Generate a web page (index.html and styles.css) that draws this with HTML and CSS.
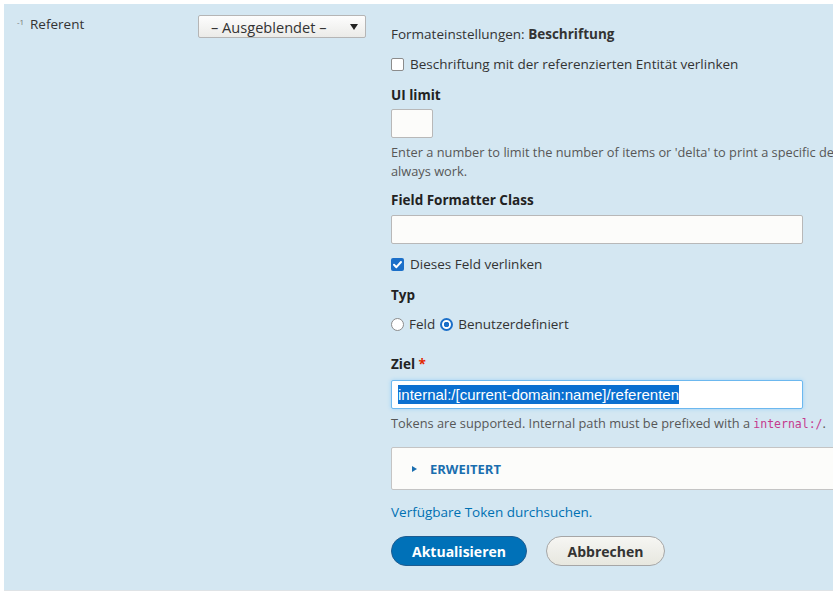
FILE: index.html
```html
<!DOCTYPE html>
<html lang="de">
<head>
<meta charset="utf-8">
<title>Formateinstellungen</title>
<link rel="stylesheet" href="styles.css">
</head>
<body>
<div class="panel">
  <div class="cell-name"><span class="weight">-1</span><span class="name">Referent</span></div>
  <div class="cell-select">
    <div class="select"><span>– Ausgeblendet –</span><svg class="arrow" width="8" height="6" viewBox="0 0 8 6"><path d="M0 0 H8 L4 6 Z" fill="#222"/></svg></div>
  </div>
  <div class="cell-settings">
    <div class="line m-first">Formateinstellungen: <strong>Beschriftung</strong></div>
    <label class="check-row m-check1"><span class="checkbox"></span>Beschriftung mit der referenzierten Entität verlinken</label>
    <div class="label m-lbl1">UI limit</div>
    <div class="input small m-input1"></div>
    <div class="desc m-desc1"><span class="nowrap">Enter a number to limit the number of items or 'delta' to print a specific delta. Leave empty to make it</span><br>always work.</div>
    <div class="label m-lbl2">Field Formatter Class</div>
    <div class="input wide m-input2"></div>
    <label class="check-row m-check2"><span class="checkbox checked"><svg width="13" height="13" viewBox="0 0 13 13"><path d="M3 6.8 L5.4 9.2 L10 4" fill="none" stroke="#fff" stroke-width="2" stroke-linecap="round" stroke-linejoin="round"/></svg></span>Dieses Feld verlinken</label>
    <div class="label m-lbl3">Typ</div>
    <div class="radios m-radios">
      <label class="radio-item"><span class="radio"></span>Feld</label>
      <label class="radio-item"><span class="radio on"></span>Benutzerdefiniert</label>
    </div>
    <div class="label m-lbl4">Ziel <span class="req">*</span></div>
    <div class="input wide focus m-input3"><span class="sel">internal:/[current-domain:name]/referenten</span></div>
    <div class="desc m-desc2">Tokens are supported. Internal path must be prefixed with a <code>internal:/</code>.</div>
    <div class="details m-details"><span class="tri"></span><span class="summary">ERWEITERT</span></div>
    <a class="link m-link" href="#">Verfügbare Token durchsuchen.</a>
    <div class="buttons m-buttons">
      <button class="btn primary">Aktualisieren</button>
      <button class="btn">Abbrechen</button>
    </div>
  </div>
</div>
</body>
</html>
```
FILE: styles.css
```css
html, body {
  margin: 0;
  padding: 0;
  background: #fff;
  overflow: hidden;
}
body {
  font-family: "Open Sans", "DejaVu Sans", sans-serif;
  font-size: 13.5px;
  color: #333;
  width: 833px;
  height: 597px;
}
.panel {
  margin: 4px 0 0 4px;
  width: 1100px;
  background: #d4e7f2;
  display: flex;
  align-items: flex-start;
  padding-bottom: 24px;
  border-bottom: 1px solid #dfe3e6;
}
.cell-name {
  width: 181px;
  padding: 11px 0 0 13px;
  line-height: 19px;
  display: flex;
  align-items: flex-start;
}
.weight {
  font-size: 8px;
  line-height: 10px;
  color: #777;
  margin-top: 2px;
  width: 13px;
}
.name { color: #333; }
.cell-select {
  width: 193px;
  padding-top: 11px;
}
.select {
  box-sizing: border-box;
  width: 168px;
  height: 23px;
  border: 1px solid #b5b5b5;
  border-radius: 2px;
  background: linear-gradient(#fdfdfd, #ebebe8);
  display: flex;
  align-items: center;
  justify-content: space-between;
  padding: 0 7px 0 12px;
  font-size: 14.6px;
  color: #333;
}
.arrow { display: block; }
.cell-settings {
  display: flex;
  flex-direction: column;
  align-items: flex-start;
  padding-top: 21px;
  width: 700px;
}
.line, .check-row, .label, .link { line-height: 19px; }
.label { font-weight: 700; color: #222; }
.check-row {
  display: flex;
  align-items: center;
  gap: 6px;
}
.checkbox {
  box-sizing: border-box;
  width: 13px;
  height: 13px;
  border: 1px solid #8c8c8c;
  border-radius: 2px;
  background: #fff;
  display: block;
}
.checkbox.checked {
  border: none;
  background: #1b6fc9;
}
.checkbox svg { display: block; }
.input {
  box-sizing: border-box;
  height: 29px;
  border: 1px solid #b8b8b8;
  border-radius: 2px;
  background: #fcfcfa;
}
.input.small { width: 42px; }
.input.wide { width: 412px; }
.input.focus {
  border-color: #6cb8ef;
  box-shadow: 0 0 4px #9fd2f7;
  background: #fff;
  display: flex;
  align-items: center;
  padding-left: 6px;
}
.sel {
  background: #0a6fd0;
  color: #fff;
  font-family: "Liberation Sans", Arial, sans-serif;
  font-size: 15px;
  line-height: 19px;
}
.desc {
  font-size: 12.8px;
  line-height: 19px;
  color: #575757;
}
.nowrap { white-space: nowrap; }
code {
  font-family: "DejaVu Sans Mono", "Liberation Mono", monospace;
  font-size: 11.5px;
  color: #c53a8e;
}
.radios { display: flex; gap: 5px; line-height: 19px; }
.radio-item { display: flex; align-items: center; gap: 5px; }
.radio {
  box-sizing: border-box;
  width: 13px;
  height: 13px;
  border: 1px solid #8c8c8c;
  border-radius: 50%;
  background: #fff;
  display: block;
}
.radio.on {
  border: 2px solid #1b6fc9;
  background: radial-gradient(circle, #1b6fc9 0 2.5px, #fff 3px);
}
.req { color: #e32700; }
.details {
  box-sizing: border-box;
  width: 600px;
  height: 43px;
  border: 1px solid #c4c4c4;
  border-radius: 2px;
  background: #fcfcfa;
  display: flex;
  align-items: center;
  padding-left: 20px;
}
.tri {
  width: 0;
  height: 0;
  border-left: 5px solid #1a6eaf;
  border-top: 3.5px solid transparent;
  border-bottom: 3.5px solid transparent;
  margin-right: 13px;
}
.summary {
  font-weight: 700;
  font-size: 13px;
  color: #1a6eaf;
}
.link {
  color: #0071b3;
  text-decoration: none;
}
.buttons { display: flex; gap: 19px; }
.btn {
  box-sizing: border-box;
  height: 30px;
  border: 1px solid #a6a6a6;
  border-radius: 20px;
  background: linear-gradient(#f6f6f3, #e7e7df);
  font-family: inherit;
  font-size: 14px;
  font-weight: 700;
  color: #333;
  padding: 0 10px;
  width: 119px;
}
.btn.primary {
  background: #0071b8;
  border-color: #1e5c90;
  color: #fff;
  width: 136px;
}
.m-first { margin-top: 0; }
.m-check1 { margin-top: 11px; }
.m-lbl1 { margin-top: 12px; }
.m-input1 { margin-top: 4px; }
.m-desc1 { margin-top: 5px; }
.m-lbl2 { margin-top: 10px; }
.m-input2 { margin-top: 5px; }
.m-check2 { margin-top: 11px; }
.m-lbl3 { margin-top: 12px; }
.m-radios { margin-top: 10px; }
.m-lbl4 { margin-top: 21px; }
.m-input3 { margin-top: 6px; }
.m-desc2 { margin-top: 5px; }
.m-details { margin-top: 13px; }
.m-link { margin-top: 13px; }
.m-buttons { margin-top: 14px; }
```
